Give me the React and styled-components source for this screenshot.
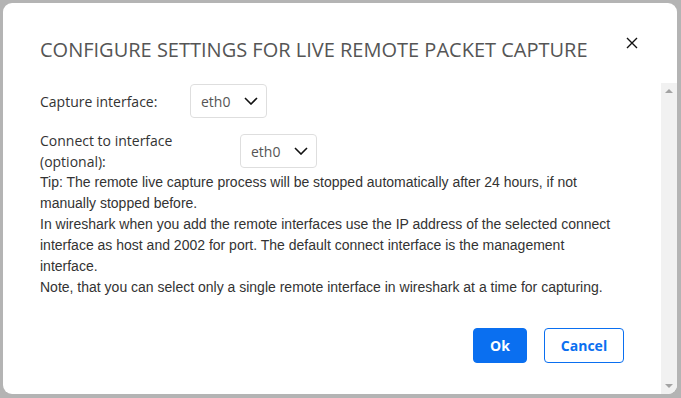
import React from "react"
import styled, { createGlobalStyle } from "styled-components"

const GlobalStyle = createGlobalStyle`
  html, body {
    margin: 0;
    padding: 0;
    background-color: #b4b4b4;
  }
  * {
    box-sizing: border-box;
  }
`

const Page = styled.div`
  width: 681px;
  height: 398px;
  padding: 3px 4px 4px 3px;
`

const Dialog = styled.div`
  width: 674px;
  height: 391px;
  display: flex;
  flex-direction: column;
  background-color: white;
  border-radius: 9px;
  overflow: hidden;
`

const Header = styled.div`
  display: flex;
  justify-content: space-between;
  align-items: flex-start;
  padding: 33px 39px 20px 37px;
`

const Title = styled.h2`
  margin: 0;
  font-family: "Open Sans", sans-serif;
  font-weight: 400;
  font-size: 20px;
  line-height: 27px;
  color: #555;
  text-transform: uppercase;
`

const CloseButton = styled.button`
  border: none;
  background: none;
  padding: 0;
  margin-top: 1px;
  width: 12px;
  height: 12px;
  cursor: pointer;
  display: flex;
`

const Body = styled.div`
  flex: 1;
  display: flex;
  min-height: 0;
`

const Content = styled.div`
  flex: 1;
  overflow: hidden;
  padding: 1px 40px 30px 37px;
`

const ScrollTrack = styled.div`
  width: 16px;
  display: flex;
  flex-direction: column;
  justify-content: space-between;
  align-items: center;
  padding: 6px 0 6px;
  background-color: #f1f1f1;
`

const Arrow = styled.div`
  width: 0;
  height: 0;
  border-left: 4px solid transparent;
  border-right: 4px solid transparent;
  ${p => (p.$down ? "border-top" : "border-bottom")}: 4px solid #a3a3a3;
`

const Row = styled.div`
  display: flex;
  align-items: center;
  margin-bottom: ${p => p.$mb ?? 0}px;
`

const Label = styled.label`
  width: ${p => p.$width}px;
  font-family: "Open Sans", sans-serif;
  font-size: 14px;
  line-height: 21px;
  color: #333;
`

const Select = styled.div`
  display: flex;
  align-items: center;
  justify-content: space-between;
  width: 77px;
  height: 34px;
  margin-left: ${p => p.$offset ?? 0}px;
  padding: 0 8px 0 10px;
  border: 1px solid #dedede;
  border-radius: 4px;
  font-family: "Open Sans", sans-serif;
  font-size: 14px;
  color: #555;
  cursor: pointer;
`

const Note = styled.p`
  margin: 0;
  font-family: "Liberation Sans", Arial, sans-serif;
  font-size: 14px;
  line-height: 21px;
  color: #333;
`

const Footer = styled.div`
  display: flex;
  justify-content: flex-end;
  gap: 17px;
  margin: 30px -3px 0 0;
`

const Button = styled.button`
  height: 35px;
  width: ${p => p.$width}px;
  border-radius: 4px;
  border: 1px solid #0a6ff0;
  background-color: ${p => (p.$primary ? "#0a6ff0" : "white")};
  color: ${p => (p.$primary ? "white" : "#0a6ff0")};
  font-family: "Open Sans", sans-serif;
  font-weight: 700;
  font-size: 14px;
  cursor: pointer;
`

const Chevron = () => (
  <svg width="14" height="8" viewBox="0 0 14 8">
    <polyline points="1,1 7,7 13,1" fill="none" stroke="#111" strokeWidth="1.6" />
  </svg>
)

const CloseIcon = () => (
  <svg width="12" height="12" viewBox="0 0 12 12">
    <path d="M1 1 L11 11 M11 1 L1 11" stroke="#111" strokeWidth="1.4" />
  </svg>
)

const Dropdown = ({ value, offset }) => (
  <Select $offset={offset}>
    <span>{value}</span>
    <Chevron />
  </Select>
)

export default function App() {
  return (
    <Page>
      <GlobalStyle />
      <Dialog>
        <Header>
          <Title>Configure settings for live remote packet capture</Title>
          <CloseButton aria-label="Close">
            <CloseIcon />
          </CloseButton>
        </Header>
        <Body>
          <Content>
            <Row $mb={12}>
              <Label $width={150}>Capture interface:</Label>
              <Dropdown value="eth0" />
            </Row>
            <Row>
              <Label $width={150}>Connect to interface (optional):</Label>
              <Dropdown value="eth0" offset={50} />
            </Row>
            <Note>
              Tip: The remote live capture process will be stopped automatically after 24 hours, if not
              manually stopped before.
            </Note>
            <Note>
              In wireshark when you add the remote interfaces use the IP address of the selected connect
              interface as host and 2002 for port. The default connect interface is the management
              interface.
            </Note>
            <Note>
              Note, that you can select only a single remote interface in wireshark at a time for capturing.
            </Note>
            <Footer>
              <Button $primary $width={54}>Ok</Button>
              <Button $width={80}>Cancel</Button>
            </Footer>
          </Content>
          <ScrollTrack>
            <Arrow />
            <Arrow $down />
          </ScrollTrack>
        </Body>
      </Dialog>
    </Page>
  )
}
